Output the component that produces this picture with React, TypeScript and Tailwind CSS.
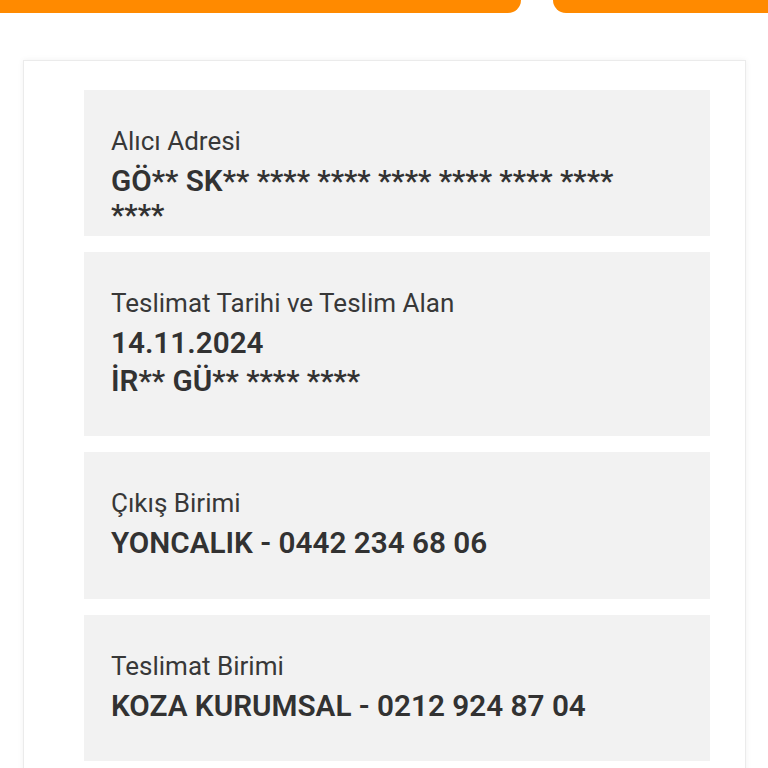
const FONT = "font-['Roboto','Liberation_Sans',sans-serif]";

function InfoBox({
  label,
  lines,
  className,
  lineGap,
}: {
  label: string;
  lines: React.ReactNode[];
  className: string;
  lineGap?: string;
}) {
  return (
    <div className={`bg-[#f2f2f2] px-[27px] pt-[35px] ${className}`}>
      <p className="text-[26px] leading-[32px] text-[#383838]">{label}</p>
      <div className="mt-[7px] flex flex-col">
        {lines.map((line, i) => (
          <p
            key={i}
            className={`text-[29.7px] font-semibold leading-[34px] text-[#323232] ${i > 0 ? lineGap ?? "" : ""}`}
          >
            {line}
          </p>
        ))}
      </div>
    </div>
  );
}

export default function App() {
  return (
    <div className={`h-[768px] w-[768px] overflow-hidden bg-white ${FONT}`}>
      {/* orange tabs at the top */}
      <div className="flex h-[13px] w-full">
        <div className="h-full w-[521px] rounded-br-[22px] bg-[#ff8a00]" />
        <div className="ml-[32px] h-full flex-1 rounded-bl-[22px] bg-[#ff8a00]" />
      </div>

      <div className="mx-[22px] ml-[23px] mt-[47px] border border-[#ebebeb] bg-white pb-[40px] pl-[60px] pr-[35px] pt-[29px] shadow-[0_0_6px_rgba(0,0,0,0.06)]">
        <div className="flex flex-col gap-[16px]">
          <InfoBox
            label="Alıcı Adresi"
            className="h-[146px]"
            lines={[
              <>
                GÖ** SK** **** **** **** **** **** ****
                <br />
                ****
              </>,
            ]}
          />
          <InfoBox
            label="Teslimat Tarihi ve Teslim Alan"
            className="h-[184px]"
            lineGap="mt-[4px]"
            lines={["14.11.2024", "İR** GÜ** **** ****"]}
          />
          <InfoBox
            label="Çıkış Birimi"
            className="h-[147px]"
            lines={["YONCALIK - 0442 234 68 06"]}
          />
          <InfoBox
            label="Teslimat Birimi"
            className="h-[146px]"
            lines={["KOZA KURUMSAL - 0212 924 87 04"]}
          />
        </div>
      </div>
    </div>
  );
}
